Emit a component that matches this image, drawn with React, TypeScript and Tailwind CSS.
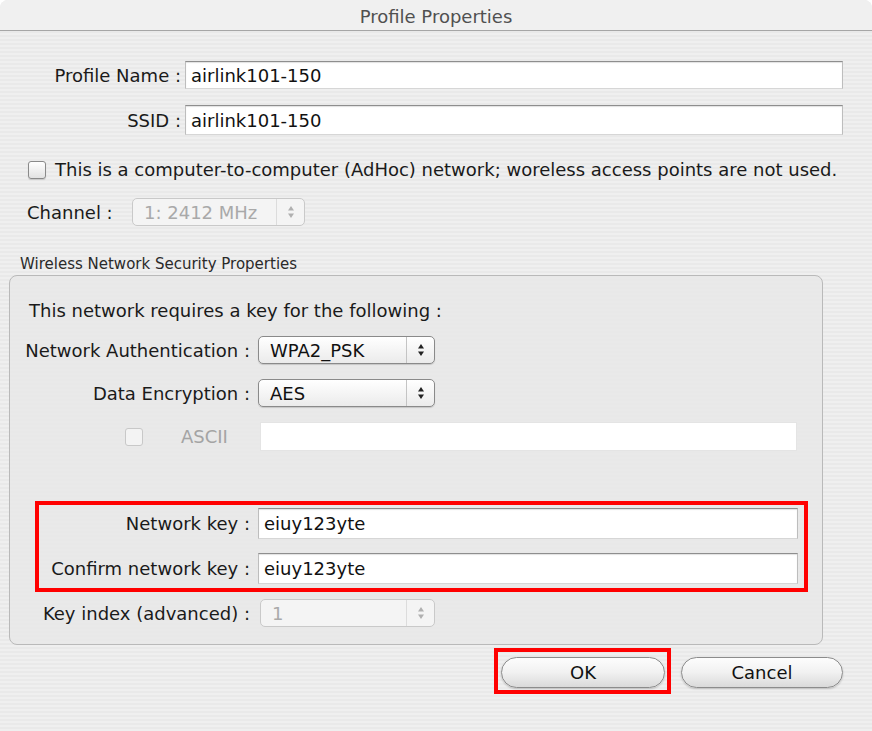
import React from 'react';

const stripes =
  'bg-[repeating-linear-gradient(0deg,#efefef_0px,#efefef_2px,#e9e9e9_2px,#e9e9e9_4px)]';

const Arrows: React.FC<{ disabled?: boolean }> = ({ disabled }) => (
  <svg width="8" height="14" viewBox="0 0 8 14">
    <path d="M4 1 L7 5.5 L1 5.5 Z" fill={disabled ? '#b0b0b0' : '#222'} />
    <path d="M4 13 L7 8.5 L1 8.5 Z" fill={disabled ? '#b0b0b0' : '#222'} />
  </svg>
);

const Popup: React.FC<{ value: string; width: string; disabled?: boolean }> = ({
  value,
  width,
  disabled,
}) => (
  <div
    className={`${width} h-[28px] flex items-stretch rounded-[5px] border ${
      disabled
        ? 'border-[#c9c9c9] bg-[#f4f4f4] text-[#a9a9a9]'
        : 'border-[#8a8a8a] bg-gradient-to-b from-white to-[#ebebeb] text-[#111] shadow-[0_1px_1px_rgba(0,0,0,0.15)]'
    }`}
  >
    <div className="flex-1 flex items-center pl-[11px]">{value}</div>
    <div
      className={`w-[28px] flex items-center justify-center border-l ${
        disabled ? 'border-[#dcdcdc]' : 'border-[#c4c4c4]'
      }`}
    >
      <Arrows disabled={disabled} />
    </div>
  </div>
);

const TextInput: React.FC<{ value?: string; width: string; height?: string; plain?: boolean }> = ({
  value,
  width,
  height = 'h-[29px]',
  plain,
}) => (
  <div
    className={`${width} ${height} bg-white flex items-center pl-[5px] text-[#111] ${
      plain
        ? 'border border-[#e4e4e4]'
        : 'border border-t-[#8e8e8e] border-x-[#bdbdbd] border-b-[#d6d6d6] shadow-[inset_0_1px_1px_rgba(0,0,0,0.12)]'
    }`}
  >
    {value}
  </div>
);

const Checkbox: React.FC<{ disabled?: boolean }> = ({ disabled }) => (
  <div
    className={`w-[18px] h-[18px] shrink-0 rounded-[3px] border ${
      disabled
        ? 'border-[#c8c8c8] bg-[#f3f3f3]'
        : 'border-[#8a8a8a] bg-gradient-to-b from-white to-[#e2e2e2] shadow-[0_1px_1px_rgba(0,0,0,0.15)]'
    }`}
  />
);

const PillButton: React.FC<{ label: string; width: string }> = ({ label, width }) => (
  <div
    className={`${width} h-[31px] rounded-full border border-[#8c8c8c] bg-gradient-to-b from-[#fdfdfd] via-[#f1f1f1] to-[#dadada] flex items-center justify-center text-[#111] shadow-[0_1px_2px_rgba(0,0,0,0.2)]`}
  >
    {label}
  </div>
);

export default function App() {
  return (
    <div
      className={`w-[872px] h-[731px] ${stripes} text-[18px] leading-[27px] text-[#1a1a1a] overflow-hidden rounded-t-[8px]`}
      style={{ fontFamily: '"DejaVu Sans", "Noto Sans", sans-serif' }}
    >
      {/* title bar */}
      <div className="h-[31px] pt-[2px] border-b border-[#a6a6a6] flex items-center justify-center text-[18px] text-[#505050] bg-[#f0f0f0]">
        Profile Properties
      </div>

      <div className="pt-[30px]">
        <div className="flex items-center">
          <div className="w-[181px] text-right whitespace-nowrap">Profile Name :</div>
          <div className="ml-[4px]">
            <TextInput value="airlink101-150" width="w-[658px]" height="h-[28px]" />
          </div>
        </div>
        <div className="flex items-center mt-[16px]">
          <div className="w-[181px] text-right">SSID :</div>
          <div className="ml-[4px]">
            <TextInput value="airlink101-150" width="w-[658px]" height="h-[30px]" />
          </div>
        </div>

        <div className="flex items-center mt-[21px] pl-[28px]">
          <Checkbox />
          <span className="ml-[9px] whitespace-nowrap">
            This is a computer-to-computer (AdHoc) network; woreless access points are not used.
          </span>
        </div>

        <div className="flex items-center mt-[15px] pl-[27px]">
          <span className="w-[105px]">Channel :</span>
          <Popup value="1: 2412 MHz" width="w-[173px]" disabled />
        </div>

        <div className="mt-[29px] pl-[20px] text-[15px] leading-[18px] text-[#2a2a2a]">
          Wireless Network Security Properties
        </div>

        {/* group box */}
        <div className="ml-[9px] w-[814px] mt-[2px] rounded-[8px] border border-[#b9b9b9] bg-[#e7e7e7]/70 pb-[17px]">
          <div className="pt-[23px] pl-[19px] leading-[24px]">
            This network requires a key for the following :
          </div>
          <div className="flex items-center mt-[13px]">
            <div className="w-[240px] text-right whitespace-nowrap">Network Authentication :</div>
            <div className="ml-[8px]">
              <Popup value="WPA2_PSK" width="w-[177px]" />
            </div>
          </div>
          <div className="flex items-center mt-[15px]">
            <div className="w-[240px] text-right">Data Encryption :</div>
            <div className="ml-[8px]">
              <Popup value="AES" width="w-[177px]" />
            </div>
          </div>
          <div className="flex items-center mt-[15px]">
            <div className="w-[250px] flex items-center pl-[115px] text-[#a4a4a4]">
              <Checkbox disabled />
              <span className="ml-[38px]">ASCII</span>
            </div>
            <TextInput width="w-[537px]" plain />
          </div>

          {/* highlighted keys */}
          <div className="ml-[25px] mt-[50px] w-[773px] border-[4px] border-[#ff0000] pt-[3px] pb-[4px]">
            <div className="flex items-center">
              <div className="w-[211px] text-right">Network key :</div>
              <div className="ml-[8px]">
                <TextInput value="eiuy123yte" width="w-[540px]" height="h-[31px]" />
              </div>
            </div>
            <div className="flex items-center mt-[14px]">
              <div className="w-[211px] text-right whitespace-nowrap">Confirm network key :</div>
              <div className="ml-[8px]">
                <TextInput value="eiuy123yte" width="w-[540px]" height="h-[31px]" />
              </div>
            </div>
          </div>

          <div className="flex items-center mt-[7px]">
            <div className="w-[240px] text-right whitespace-nowrap">Key index (advanced) :</div>
            <div className="ml-[10px]">
              <Popup value="1" width="w-[175px]" disabled />
            </div>
          </div>
        </div>

        {/* buttons */}
        <div className="flex items-start mt-[3px] pl-[494px]">
          <div className="border-[4px] border-[#ff0000] pt-[5px] pb-[2px] pl-[3px] pr-[2px]">
            <PillButton label="OK" width="w-[164px]" />
          </div>
          <div className="ml-[10px] mt-[9px]">
            <PillButton label="Cancel" width="w-[162px]" />
          </div>
        </div>
      </div>
    </div>
  );
}
